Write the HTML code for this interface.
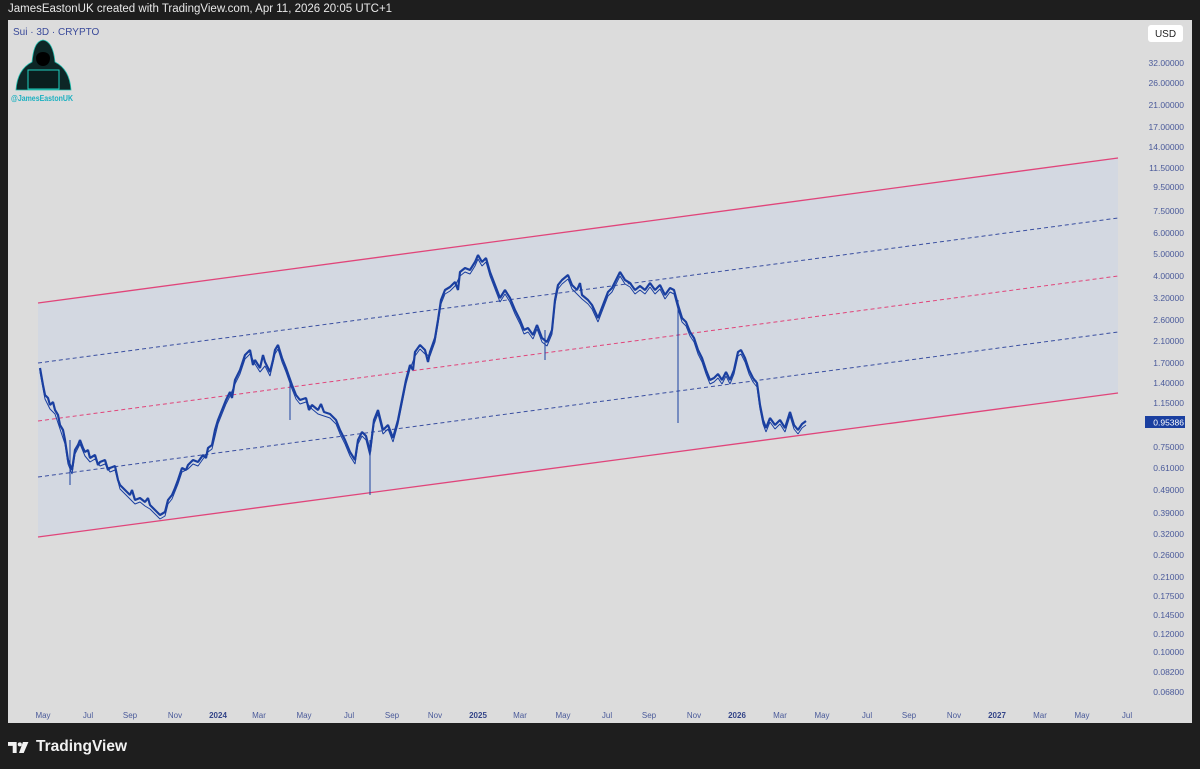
<!DOCTYPE html>
<html><head><meta charset="utf-8"><style>
html,body{margin:0;padding:0;background:#1e1e1e;width:1200px;height:769px;overflow:hidden;font-family:"Liberation Sans",sans-serif}
.top{position:absolute;left:8px;top:3px;color:#e8e8e8;font-size:11.5px}
.panel{position:absolute;left:8px;top:20px;width:1184px;height:703px;background:#dcdcdc}
.tv{position:absolute;left:8px;top:738px;color:#f2f2f2;font-size:15.5px;font-weight:bold;display:flex;align-items:center;gap:6px}
</style></head><body>
<div class="top">JamesEastonUK created with TradingView.com, Apr 11, 2026 20:05 UTC+1</div>
<div class="panel"></div>
<svg style="position:absolute;left:0;top:0" width="1200" height="769">
<polygon points="38,303 1118,158 1118,393 38,537" fill="#d3d8e1"/>
<line x1="38" y1="303" x2="1118" y2="158" stroke="#e0457a" stroke-width="1.3"/>
<line x1="38" y1="537" x2="1118" y2="393" stroke="#e0457a" stroke-width="1.3"/>
<line x1="38" y1="363" x2="1118" y2="218" stroke="#3a4fa0" stroke-width="1" stroke-dasharray="4,3"/>
<line x1="38" y1="421" x2="1118" y2="276" stroke="#e0457a" stroke-width="1" stroke-dasharray="4,3"/>
<line x1="38" y1="477" x2="1118" y2="332" stroke="#3a4fa0" stroke-width="1" stroke-dasharray="4,3"/>
<g stroke="#1a3fa0" fill="none" stroke-width="1">
<line x1="678" y1="300" x2="678" y2="423"/><line x1="370" y1="440" x2="370" y2="495"/><line x1="545" y1="330" x2="545" y2="360"/><line x1="70" y1="440" x2="70" y2="485"/><line x1="290" y1="380" x2="290" y2="420"/>
</g>
<g fill="none" stroke="#1a3fa0" stroke-linejoin="bevel">
<polyline stroke-width="1" transform="translate(0,4)" points="40,368 45,395 50,405 55,410 60,425 65,440 68,460 72,470 75,450 80,440 85,452 90,458 95,455 100,462 105,460 110,468 115,466 120,485 125,490 130,495 135,500 140,498 145,502 150,505 155,510 160,515 165,512 168,500 172,495 178,480 182,468 188,465 193,460 198,462 203,455 208,448 212,445 218,420 222,410 226,400 230,392 235,380 240,370 245,355 250,350 255,360 260,368 265,362 270,372 275,350 278,345 282,358 286,368 292,385 296,395 300,400 306,398 312,405 318,410 324,412 330,414 336,420 340,430 345,440 350,452 355,460 358,440 362,432 366,436 370,452 374,420 378,410 383,430 388,425 393,438 398,420 402,400 406,380 410,365 415,352 420,345 425,350 430,352 435,338 438,320 441,300 445,290 450,287 455,282 460,272 465,268 470,270 475,262 478,255 482,262 486,258 490,272 495,285 500,298 505,290 510,298 515,310 520,320 524,330 528,328 533,335 537,325 542,338 547,342 552,330 555,300 558,285 562,280 568,275 572,285 577,290 582,295 588,300 592,305 598,318 603,305 608,292 612,288 616,280 620,272 625,280 630,283 635,290 640,286 645,290 650,283 655,290 660,285 665,295 670,288 674,290 678,305 682,318 686,322 690,332 694,338 698,350 702,358 706,370 710,380 714,378 718,374 722,380 726,372 730,380 734,370 738,352 741,350 745,358 749,370 753,378 757,383 760,405 763,420 766,428 770,418 775,425 780,420 785,428 790,412 794,425 798,430 802,424 806,421"/>
<polyline stroke-width="2.2" points="40,368 43,385 45,395 48,398 50,405 53,402 55,410 58,415 60,425 63,430 65,440 68,460 72,470 75,450 78,445 80,440 83,448 85,452 88,450 90,458 95,455 98,465 100,462 105,460 108,470 110,468 115,466 118,480 120,485 125,490 130,495 132,490 135,500 140,498 145,502 148,498 150,505 155,510 160,515 165,512 168,500 172,495 175,488 178,480 182,468 186,470 188,465 193,460 198,462 203,455 206,458 208,448 212,445 215,430 218,420 222,410 226,400 230,392 232,398 235,380 240,370 245,355 250,350 253,365 255,360 260,368 263,355 265,362 270,372 273,360 275,350 278,345 282,358 286,368 292,385 296,395 300,400 306,398 309,410 312,405 318,410 321,404 324,412 330,414 336,420 340,430 345,440 350,452 355,460 358,440 362,432 366,436 370,452 374,420 378,410 383,430 388,425 393,438 398,420 402,400 406,380 410,365 413,370 415,352 420,345 425,350 428,362 430,352 435,338 438,320 441,300 445,290 450,287 455,282 458,290 460,272 465,268 470,270 475,262 478,255 482,262 486,258 490,272 495,285 500,298 505,290 510,298 515,310 520,320 524,330 528,328 533,335 537,325 542,338 547,342 552,330 555,300 558,285 562,280 568,275 572,285 577,290 580,283 582,295 588,300 592,305 598,318 603,305 608,292 612,288 616,280 620,272 625,280 630,283 635,290 640,286 645,290 650,283 655,290 660,285 665,295 670,288 674,290 678,305 682,318 686,322 690,332 694,338 698,350 702,358 706,370 710,380 714,378 718,374 722,380 726,372 730,380 734,370 738,352 741,350 745,358 749,370 753,378 757,383 760,405 763,420 766,428 770,418 775,425 780,420 785,428 790,412 794,425 798,430 802,424 806,421"/>
</g>
<rect x="1148" y="25" width="35" height="17" rx="3" fill="#ffffff"/>
<text x="1165.5" y="37" font-size="10" fill="#222" text-anchor="middle" font-family="Liberation Sans">USD</text>
<g font-size="8.5" fill="#4a5a9a" text-anchor="end" font-family="Liberation Sans">
<text x="1184" y="66">32.00000</text><text x="1184" y="86">26.00000</text><text x="1184" y="108">21.00000</text><text x="1184" y="130">17.00000</text><text x="1184" y="150">14.00000</text><text x="1184" y="171">11.50000</text><text x="1184" y="190">9.50000</text><text x="1184" y="214">7.50000</text><text x="1184" y="236">6.00000</text><text x="1184" y="257">5.00000</text><text x="1184" y="279">4.00000</text><text x="1184" y="301">3.20000</text><text x="1184" y="323">2.60000</text><text x="1184" y="344">2.10000</text><text x="1184" y="366">1.70000</text><text x="1184" y="386">1.40000</text><text x="1184" y="406">1.15000</text><text x="1184" y="450">0.75000</text><text x="1184" y="471">0.61000</text><text x="1184" y="493">0.49000</text><text x="1184" y="516">0.39000</text><text x="1184" y="537">0.32000</text><text x="1184" y="558">0.26000</text><text x="1184" y="580">0.21000</text><text x="1184" y="599">0.17500</text><text x="1184" y="618">0.14500</text><text x="1184" y="637">0.12000</text><text x="1184" y="655">0.10000</text><text x="1184" y="675">0.08200</text><text x="1184" y="695">0.06800</text>
</g>
<rect x="1145" y="416" width="40" height="12" fill="#1a3fa0"/>
<text x="1184" y="425.5" font-size="8.5" fill="#fff" text-anchor="end" font-family="Liberation Sans">0.95386</text>
<g font-size="8" fill="#4a5a9a" text-anchor="middle" font-family="Liberation Sans">
<text x="43" y="718">May</text><text x="88" y="718">Jul</text><text x="130" y="718">Sep</text><text x="175" y="718">Nov</text><text x="218" y="718" font-weight="bold" fill="#334488">2024</text><text x="259" y="718">Mar</text><text x="304" y="718">May</text><text x="349" y="718">Jul</text><text x="392" y="718">Sep</text><text x="435" y="718">Nov</text><text x="478" y="718" font-weight="bold" fill="#334488">2025</text><text x="520" y="718">Mar</text><text x="563" y="718">May</text><text x="607" y="718">Jul</text><text x="649" y="718">Sep</text><text x="694" y="718">Nov</text><text x="737" y="718" font-weight="bold" fill="#334488">2026</text><text x="780" y="718">Mar</text><text x="822" y="718">May</text><text x="867" y="718">Jul</text><text x="909" y="718">Sep</text><text x="954" y="718">Nov</text><text x="997" y="718" font-weight="bold" fill="#334488">2027</text><text x="1040" y="718">Mar</text><text x="1082" y="718">May</text><text x="1127" y="718">Jul</text>
</g>
<text x="13" y="35" font-size="10" fill="#3a4a9a" font-family="Liberation Sans">Sui · 3D · CRYPTO</text>
<!-- hacker logo -->
<path d="M43,40 C35,41 33,52 32,62 C24,66 17,74 16,90 L71,90 C70,74 63,66 55,62 C54,52 51,41 43,40 Z" fill="#0d2626" stroke="#20c0b0" stroke-width="0.8"/>
<path d="M36,58 C36,50 50,50 50,58 C50,64 46,66 43,66 C40,66 36,64 36,58 Z" fill="#000"/>
<rect x="28" y="70" width="31" height="19" fill="#0a1e1e" stroke="#20d0c0" stroke-width="1"/>
<text x="11" y="101" font-size="8.5" font-weight="bold" fill="#1ab0c0" font-family="Liberation Sans" textLength="62" lengthAdjust="spacingAndGlyphs">@JamesEastonUK</text>
</svg>
<div class="tv"><svg width="22" height="13" viewBox="0 0 28 16"><path d="M0 1h11v14H6V6H0z" fill="#f2f2f2"/><circle cx="15" cy="4" r="2.6" fill="#f2f2f2"/><path d="M19 1h7l-6 14h-6z" fill="#f2f2f2"/></svg><span>TradingView</span></div>
</body></html>
